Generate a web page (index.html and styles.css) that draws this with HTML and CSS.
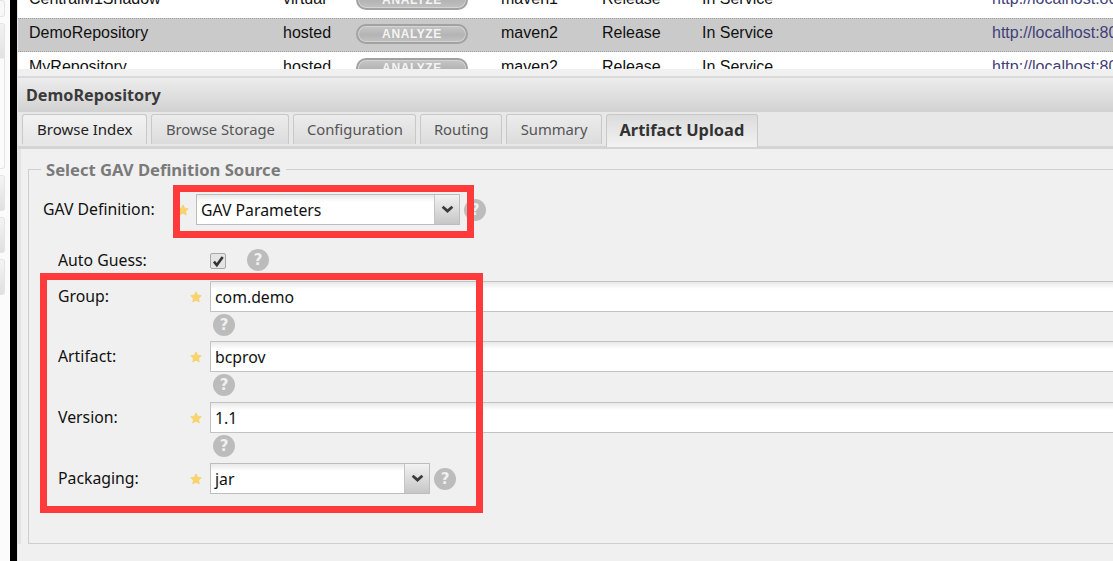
FILE: index.html
```html
<!DOCTYPE html>
<html>
  <head>
    <title>Artifact Upload</title>
    <link rel="stylesheet" href="styles.css">
  </head>
  <body>
    <div class="sidebar">
      <div class="side-tab top"></div>
      <div class="side-tab tall"></div>
      <div class="side-tab"></div>
      <div class="side-tab"></div>
      <div class="side-tab"></div>
    </div>
    <div class="divider"></div>
    <div class="main">
      <div class="repo-grid">
        <div class="repo-row">
          <span>CentralM1Shadow</span><span>virtual</span>
          <span class="analyze">ANALYZE</span>
          <span>maven1</span><span>Release</span><span>In Service</span>
          <a class="url">http://localhost:8081/nexus/content</a>
        </div>
        <div class="repo-row selected">
          <span>DemoRepository</span><span>hosted</span>
          <span class="analyze">ANALYZE</span>
          <span>maven2</span><span>Release</span><span>In Service</span>
          <a class="url">http://localhost:8081/nexus/content</a>
        </div>
        <div class="repo-row">
          <span>MyRepository</span><span>hosted</span>
          <span class="analyze">ANALYZE</span>
          <span>maven2</span><span>Release</span><span>In Service</span>
          <a class="url">http://localhost:8081/nexus/content</a>
        </div>
      </div>

      <div class="panel">
        <div class="panel-title">DemoRepository</div>
        <div class="tabs">
          <div class="tab first">Browse Index</div>
          <div class="tab">Browse Storage</div>
          <div class="tab snug">Configuration</div>
          <div class="tab snug">Routing</div>
          <div class="tab">Summary</div>
          <div class="tab active">Artifact Upload</div>
        </div>
        <div class="panel-body">
          <fieldset class="gav">
            <legend>Select GAV Definition Source</legend>

            <div class="row row-def">
              <label class="lbl lbl-def">GAV Definition:</label>
              <svg class="star star-def" viewBox="0 0 12 12"><use href="#star"/></svg>
              <div class="combo combo-def">
                <span class="combo-text">GAV Parameters</span>
                <span class="combo-btn"><svg class="chev" viewBox="0 0 12 8"><path d="M1.5 1.5 6 5.5l4.500-4"/></svg></span>
              </div>
              <span class="help help-side">?</span>
            </div>

            <div class="row row-auto">
              <label class="lbl lbl-auto">Auto Guess:</label>
              <span class="check"><svg viewBox="0 0 12 12"><path d="M2.500 6.500 5 9.500 10 2.500"/></svg></span>
              <span class="help help-auto">?</span>
            </div>

            <div class="row">
              <label class="lbl">Group:</label>
              <svg class="star" viewBox="0 0 12 12"><use href="#star"/></svg>
              <div class="text-field">com.demo</div>
            </div>
            <span class="help help-below tight">?</span>

            <div class="row">
              <label class="lbl">Artifact:</label>
              <svg class="star" viewBox="0 0 12 12"><use href="#star"/></svg>
              <div class="text-field">bcprov</div>
            </div>
            <span class="help help-below">?</span>

            <div class="row">
              <label class="lbl">Version:</label>
              <svg class="star" viewBox="0 0 12 12"><use href="#star"/></svg>
              <div class="text-field">1.1</div>
            </div>
            <span class="help help-below">?</span>

            <div class="row">
              <label class="lbl">Packaging:</label>
              <svg class="star" viewBox="0 0 12 12"><use href="#star"/></svg>
              <div class="combo combo-pack">
                <span class="combo-text">jar</span>
                <span class="combo-btn"><svg class="chev" viewBox="0 0 12 8"><path d="M1.5 1.5 6 5.5l4.500-4"/></svg></span>
              </div>
              <span class="help help-side">?</span>
            </div>
          </fieldset>
        </div>
      </div>
    </div>

    <!-- red annotation boxes drawn over the screenshot -->
    <div class="callout callout-def"></div>
    <div class="callout callout-fields"></div>

    <svg class="defs" width="0" height="0">
      <symbol id="star" viewBox="0 0 12 12">
        <path d="M6 .8 7.600 4.200 11.300 4.700 8.600 7.200 9.300 11 6 9.200 2.700 11 3.400 7.200.7 4.700 4.400 4.200Z" fill="#fbd467" stroke="#f2c65a" stroke-width=".5"/>
      </symbol>
    </svg>
  </body>
</html>
```

FILE: styles.css
```css
* {
  box-sizing: border-box;
}
body,
html {
  margin: 0;
  height: 100%;
  overflow: hidden;
}
body {
  display: flex;
  background: #f0f0f0;
  font-family: "Noto Sans", "DejaVu Sans", sans-serif;
  color: #111;
}
.defs {
  position: absolute;
}

/* left edge */
.sidebar {
  width: 10px;
  background: #fbfbfb;
  flex: none;
}
.side-tab {
  width: 5px;
  height: 36px;
  margin-bottom: 6px;
  background: linear-gradient(#f4f4f4, #e0e0e0);
  border: 1px solid #e4e4e4;
  border-left: none;
  border-radius: 0 3px 3px 0;
}
.side-tab.top {
  height: 17px;
  background: #f8f8f8;
}
.side-tab.tall {
  height: 146px;
  background: linear-gradient(#f2f2f2, #e2e2e2 34px, #fbfbfb 35px);
}
.divider {
  width: 7px;
  background: #000;
  flex: none;
}
.main {
  flex: 1;
  min-width: 0;
  overflow: hidden;
  border-left: 1px solid #e4e4e4;
}

/* repository grid */
.repo-grid {
  height: 69px;
  overflow: hidden;
  background: #fff;
  font-family: "Liberation Sans", Arial, sans-serif;
  font-size: 16px;
}
.repo-row {
  display: grid;
  grid-template-columns: 254px 73px 145px 101px 100px 290px 1fr;
  align-items: center;
  height: 34px;
  padding: 0 0 5px 11px;
  white-space: nowrap;
}
.repo-row:first-child {
  margin-top: -16px;
}
.repo-row.selected {
  background: #cacaca;
  border-top: 1px dotted #a0a0a0;
  border-bottom: 1px dotted #a0a0a0;
}
.analyze {
  width: 112px;
  height: 20px;
  margin-top: 3px;
  border-radius: 10px;
  border: 2px solid #a2a2a2;
  background: linear-gradient(#c6c6c6, #b4b4b4 55%, #c2c2c2);
  box-shadow: inset 0 0 0 1px #d4d4d4;
  color: #f4f4f4;
  font-size: 12px;
  font-weight: bold;
  letter-spacing: .6px;
  line-height: 16px;
  text-align: center;
}
.url {
  color: #3f3f78;
}

/* detail panel */
.panel {
  background: #f0f0f0;
}
.panel-title {
  margin-top: 7px;
  height: 36px;
  border-top: 2px solid #dadada;
  border-bottom: 1px solid #d2d2d2;
  background: linear-gradient(#ededed, #d2d2d2);
  padding-left: 8px;
  font-size: 16.200px;
  font-weight: bold;
  line-height: 34px;
  color: #3a3a3a;
}
.tabs {
  display: flex;
  gap: 4px;
  height: 37px;
  padding: 2px 0 0 4px;
  background: #e8e8e8;
  border-bottom: 3px solid #d4d4d4;
}
.tab {
  height: 30px;
  padding: 0 13.500px;
  border: 1px solid #c8c8c8;
  border-bottom: none;
  border-radius: 3px 3px 0 0;
  background: linear-gradient(#ececec, #dcdcdc);
  font-size: 14.800px;
  line-height: 28px;
  color: #555;
  white-space: nowrap;
}
.tab.snug {
  padding: 0 12.500px;
}
.tab.first {
  padding: 0 14px;
  font-size: 15px;
  color: #222;
  background: linear-gradient(#f2f2f2, #e6e6e6);
}
.tab.active {
  height: 33px;
  padding: 0 12.500px;
  font-size: 16.400px;
  font-weight: bold;
  line-height: 29px;
  color: #333;
  background: linear-gradient(#dcdcdc, #f2f2f2);
}
.panel-body {
  padding: 9px 0 0 7px;
  border-left: 3px solid #e4e4e4;
}

/* form */
fieldset.gav {
  margin: 0 -20px 0 0;
  padding: 0;
  height: 386px;
  border: 1px solid #cfcfcf;
  min-width: 0;
}
fieldset.gav legend {
  margin-left: 12px;
  padding: 0 5px;
  font-size: 16.600px;
  font-weight: bold;
  color: #7a7a7a;
}
.row {
  display: flex;
  align-items: flex-start;
  height: 31px;
  padding-left: 29px;
  font-size: 15.800px;
}
.row-def {
  padding-left: 14px;
  margin-top: 13px;
}
.row-auto {
  margin-top: 21px;
  height: 35px;
}
.lbl {
  width: 132px;
  flex: none;
  line-height: 31px;
}
.lbl-def {
  width: 134px;
}
.lbl-auto {
  width: 152px;
  line-height: 29px;
}
.star {
  width: 12px;
  height: 12px;
  margin: 10px 8px 0 0;
  flex: none;
}
.star-def {
  margin-right: 7px;
}
.text-field {
  flex: 1;
  height: 31px;
  padding-left: 4px;
  background: linear-gradient(#e8e8e8, #fff 7px);
  border: 1px solid #c2c2c2;
  border-right: none;
  line-height: 31px;
  color: #111;
}
.combo {
  display: flex;
  height: 31px;
  background: linear-gradient(#e8e8e8, #fff 7px);
  border: 1px solid #bdbdbd;
  line-height: 31px;
  flex: none;
}
.combo-def {
  width: 264px;
}
.combo-pack {
  width: 220px;
}
.combo-text {
  flex: 1;
  padding-left: 4px;
}
.combo-btn {
  display: flex;
  align-items: center;
  justify-content: center;
  width: 25px;
  border-left: 1px solid #c4c4c4;
  background: linear-gradient(#f2f2f2, #c6c6c6);
}
.chev {
  width: 13px;
  height: 9px;
  fill: none;
  stroke: #3a3a3a;
  stroke-width: 2.500;
}
.check {
  width: 16px;
  height: 16px;
  margin-top: 7px;
  border: 1px solid #a8a8a8;
  border-radius: 2px;
  background: #e4e4e4;
  display: flex;
  flex: none;
}
.check svg {
  fill: none;
  stroke: #333;
  stroke-width: 2.200;
}
.help {
  display: block;
  width: 22px;
  height: 22px;
  border-radius: 50%;
  background: #bcbcbc;
  color: #f0f0f0;
  font-family: "DejaVu Sans", sans-serif;
  font-size: 15px;
  font-weight: bold;
  line-height: 22px;
  text-align: center;
  flex: none;
}
.help-side {
  margin: 5px 0 0 4px;
}
.help-auto {
  margin: 3px 0 0 21px;
}
.help-below {
  margin: 2px 0 6px 184px;
}
.help-below.tight {
  margin-bottom: 5px;
}

/* annotations */
.callout {
  position: absolute;
  border: 7px solid #ff3a3a;
}
.callout-def {
  left: 173px;
  top: 185px;
  width: 301px;
  height: 53px;
}
.callout-fields {
  left: 40px;
  top: 273px;
  width: 443px;
  height: 240px;
}
```
